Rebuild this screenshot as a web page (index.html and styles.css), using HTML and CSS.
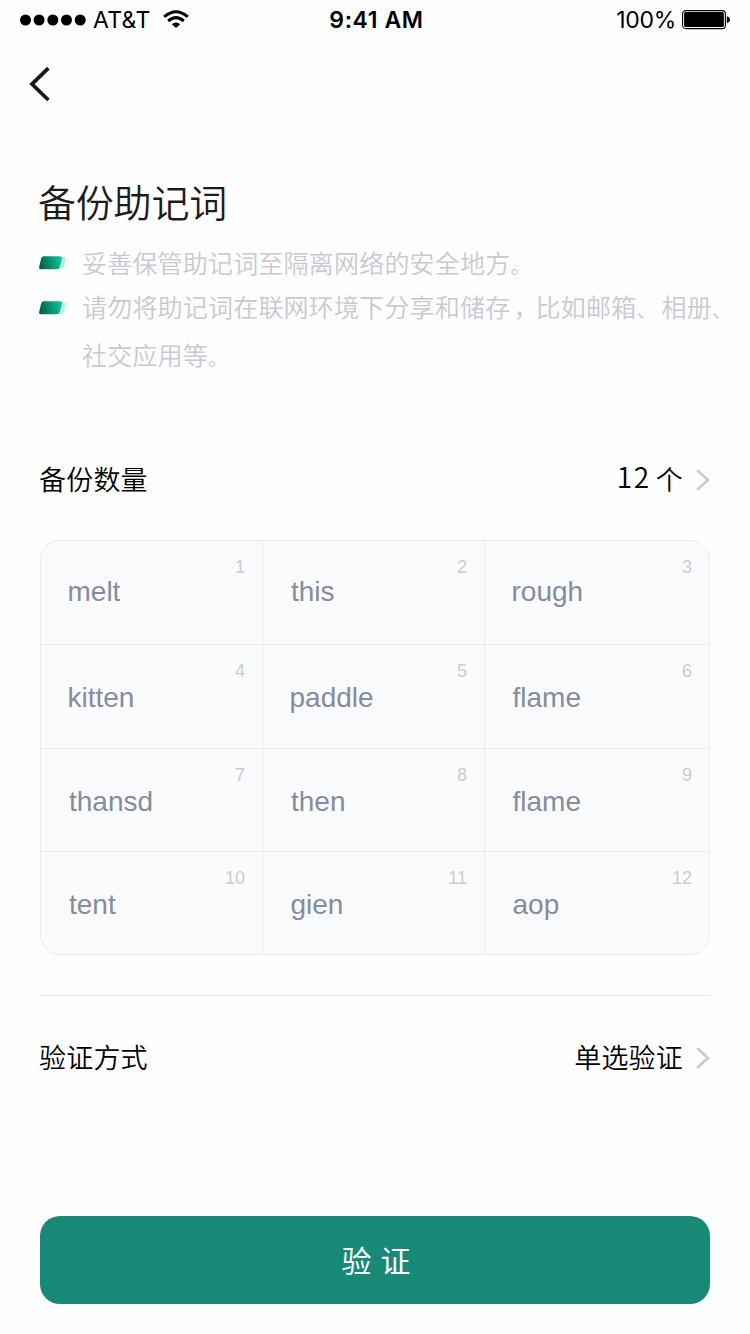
FILE: index.html
```html
<!DOCTYPE html>
<html lang="zh-CN">
<head>
<meta charset="utf-8">
<title>备份助记词</title>
<link rel="stylesheet" href="styles.css">
</head>
<body>
<div class="screen">
  <header class="status">
    <div class="carrier">
      <svg class="signal" width="67" height="12" viewBox="0 0 67 12"><circle cx="5.5" cy="6" r="5.5"/><circle cx="19.1" cy="6" r="5.5"/><circle cx="32.8" cy="6" r="5.5"/><circle cx="46.5" cy="6" r="5.5"/><circle cx="60.2" cy="6" r="5.5"/></svg>
      <span class="carrier-name">AT&amp;T</span>
      <svg class="wifi" width="26" height="20" viewBox="0 0 26 20"><path d="M1.2 6.8Q13-3.4 24.8 6.8M5.2 11Q13 4.3 20.8 11" fill="none" stroke="#000" stroke-width="3"/><path d="M8.8 14.2Q13 10.6 17.2 14.2L13 18Z"/></svg>
    </div>
    <span class="clock">9:41 AM</span>
    <div class="power">
      <span class="percent">100%</span>
      <svg width="48" height="20" viewBox="0 0 48 20"><rect x=".6" y=".6" width="42.8" height="18" rx="3.4" fill="none" stroke="#000" stroke-width="1.1"/><rect x="2.1" y="2.1" width="39.8" height="15" rx="1.6"/><path d="M44.8 6.2Q48 7 48 9.6T44.8 13Z"/></svg>
    </div>
  </header>
  <nav class="nav">
    <svg width="22" height="36" viewBox="0 0 22 36"><path d="M19.4 2.2L3 18.1L19.4 34" fill="none" stroke="#1a1a1a" stroke-width="3.8"/></svg>
  </nav>
  <h1 class="title">备份助记词</h1>
  <svg class="defs" width="0" height="0"><defs>
    <linearGradient id="chip" x1="0" y1=".6" x2="1" y2=".4"><stop offset="0" stop-color="#005e48"/><stop offset=".5" stop-color="#08936f"/><stop offset="1" stop-color="#0fc79b"/></linearGradient>
    <symbol id="bullet" viewBox="0 0 32 14"><path d="M12 1.6H28.5Q31 1.6 30.3 4L28.5 11Q28 13 26 13H10Z" fill="#eefaf7"/><path d="M9 1H24.5Q27.3 1 26.6 3.7L24.8 11Q24.3 13 22.3 13H7Z" fill="#bdeee1"/><path d="M4.6.2H20.8Q23.6.2 22.9 3L20.9 10.8Q20.2 13.3 17.8 13.3H2Q-.4 13.3.2 10.8L2 2.9Q2.5.2 4.6.2Z" fill="url(#chip)"/></symbol>
  </defs></svg>
  <ul class="tips">
    <li class="tip"><svg class="bullet" width="32" height="14"><use href="#bullet"/></svg><span>妥善保管助记词至隔离网络的安全地方<span class="stop">。</span></span></li>
    <li class="tip tip-long"><svg class="bullet" width="32" height="14"><use href="#bullet"/></svg><span>请勿将助记词在联网环境下分享和储存<span class="comma">，</span>比如邮箱<span class="stop">、</span>相册<span class="stop">、</span><br>社交应用等<span class="stop">。</span></span></li>
  </ul>
  <div class="row row-count">
    <span>备份数量</span>
    <span class="value"><span><span class="num">12</span>个</span><svg class="chevron" width="14" height="22" viewBox="0 0 14 22"><path d="M1.2 1.2L12 11L1.2 20.8" fill="none" stroke="#c8c9d1" stroke-width="2.6"/></svg></span>
  </div>
  <div class="words">
    <div class="cell"><span class="index">1</span><span class="word">melt</span></div>
    <div class="cell"><span class="index">2</span><span class="word shift">this</span></div>
    <div class="cell"><span class="index">3</span><span class="word">rough</span></div>
    <div class="cell"><span class="index">4</span><span class="word">kitten</span></div>
    <div class="cell"><span class="index">5</span><span class="word">paddle</span></div>
    <div class="cell"><span class="index">6</span><span class="word nudge">flame</span></div>
    <div class="cell"><span class="index">7</span><span class="word shift">thansd</span></div>
    <div class="cell"><span class="index">8</span><span class="word shift">then</span></div>
    <div class="cell"><span class="index">9</span><span class="word nudge">flame</span></div>
    <div class="cell"><span class="index">10</span><span class="word shift">tent</span></div>
    <div class="cell"><span class="index">11</span><span class="word nudge">gien</span></div>
    <div class="cell"><span class="index">12</span><span class="word nudge">aop</span></div>
  </div>
  <hr class="divider">
  <div class="row row-method">
    <span>验证方式</span>
    <span class="value"><span>单选验证</span><svg class="chevron" width="14" height="22" viewBox="0 0 14 22"><path d="M1.2 1.2L12 11L1.2 20.8" fill="none" stroke="#c8c9d1" stroke-width="2.6"/></svg></span>
  </div>
  <button class="submit">验 证</button>
</div>
</body>
</html>
```
FILE: styles.css
```css
* { box-sizing: border-box; }
body { margin: 0; background: #fefefe; }
.screen {
  width: 750px; height: 1334px; overflow: hidden;
  display: flex; flex-direction: column;
  font-family: "Noto Sans CJK SC", sans-serif; font-weight: 350; color: #000;
}
svg { display: block; flex: none; }
.status {
  height: 40px; padding: 0 20px; flex: none;
  display: grid; grid-template-columns: 1fr auto 1fr; align-items: center;
  font: 400 23px/40px Inter, sans-serif;
}
.carrier { display: flex; align-items: center; }
.carrier-name { margin-left: 6px; width: 58px; letter-spacing: .3px; }
.wifi { margin-left: 12px; }
.clock { font-weight: 600; margin-left: 3px; letter-spacing: .6px; }
.power { display: flex; align-items: center; justify-content: flex-end; gap: 6px; }
.percent { letter-spacing: -.3px; }
.nav { height: 88px; padding: 26px 0 0 29px; flex: none; }
.title {
  margin: 45px 0 0 38px; font-size: 38px; line-height: 56px;
  font-weight: 350; color: #1c1c1c; letter-spacing: -.2px; flex: none;
}
.defs { position: absolute; }
.tips { list-style: none; margin: 11px 0 0; padding: 0 0 0 39px; flex: none; }
.tip {
  display: flex; font-size: 25px; line-height: 44px; letter-spacing: .2px;
  color: #c8c9d2; white-space: nowrap;
}
.tip-long { line-height: 48px; margin-top: -2px; }
.bullet { margin: 16px 11px 0 0; }
.tip-long .bullet { margin-top: 19px; }
.comma {
  display: inline-block; width: 25.2px; padding-left: 3px; line-height: 1;
  font-feature-settings: "halt"; letter-spacing: 0;
}
.stop { display: inline-block; width: 25.2px; font-size: 21px; line-height: 1; }
.row {
  display: flex; justify-content: space-between; align-items: center;
  height: 40px; padding: 0 40px 0 39px; font-size: 27px; line-height: 40px;
  letter-spacing: .2px; flex: none;
}
.row-count { margin-top: 81px; }
.row-method { margin-top: 41px; }
.value { display: flex; align-items: center; gap: 13px; }
.chevron { margin-top: 2px; }
.num { font-size: 28px; line-height: 1; vertical-align: 2px; letter-spacing: 1.6px; margin-right: 5px; }
.words {
  margin: 41px 40px 0; width: 670px; flex: none;
  display: grid; grid-template-columns: 222px 222px 224px;
  grid-template-rows: 104px 104px 103px 102px;
  border: 1px solid #e9ebf2; border-radius: 20px; background: #fafbfd; overflow: hidden;
  font-family: "Liberation Sans", sans-serif; font-weight: 400;
}
.cell {
  border-right: 1px solid #e9ebf2; border-bottom: 1px solid #e9ebf2;
  padding: 16px 17px 0 26.5px; display: flex; flex-direction: column;
}
.cell:nth-child(3n) { border-right: 0; }
.cell:nth-child(n+10) { border-bottom: 0; }
.index { align-self: flex-end; font-size: 18px; line-height: 20px; color: #c9cbd3; }
.word { font-size: 28px; line-height: 32px; margin-top: -1px; color: #858ca0; }
.cell:nth-child(n+4) .word { margin-top: 1px; }
.shift { margin-left: 1.5px; }
.nudge { margin-left: 1px; }
.divider { width: 670px; height: 1px; margin: 40px 40px 0; border: 0; background: #e9e9ed; flex: none; }
.submit {
  width: 670px; height: 88px; margin: 139px 40px 0; border: 0; border-radius: 20px; padding: 0 0 2px 2px;
  background: #178976; color: #fff; flex: none; word-spacing: 2.5px;
  font: 400 30px/86px "Noto Sans CJK SC", sans-serif;
}
```
